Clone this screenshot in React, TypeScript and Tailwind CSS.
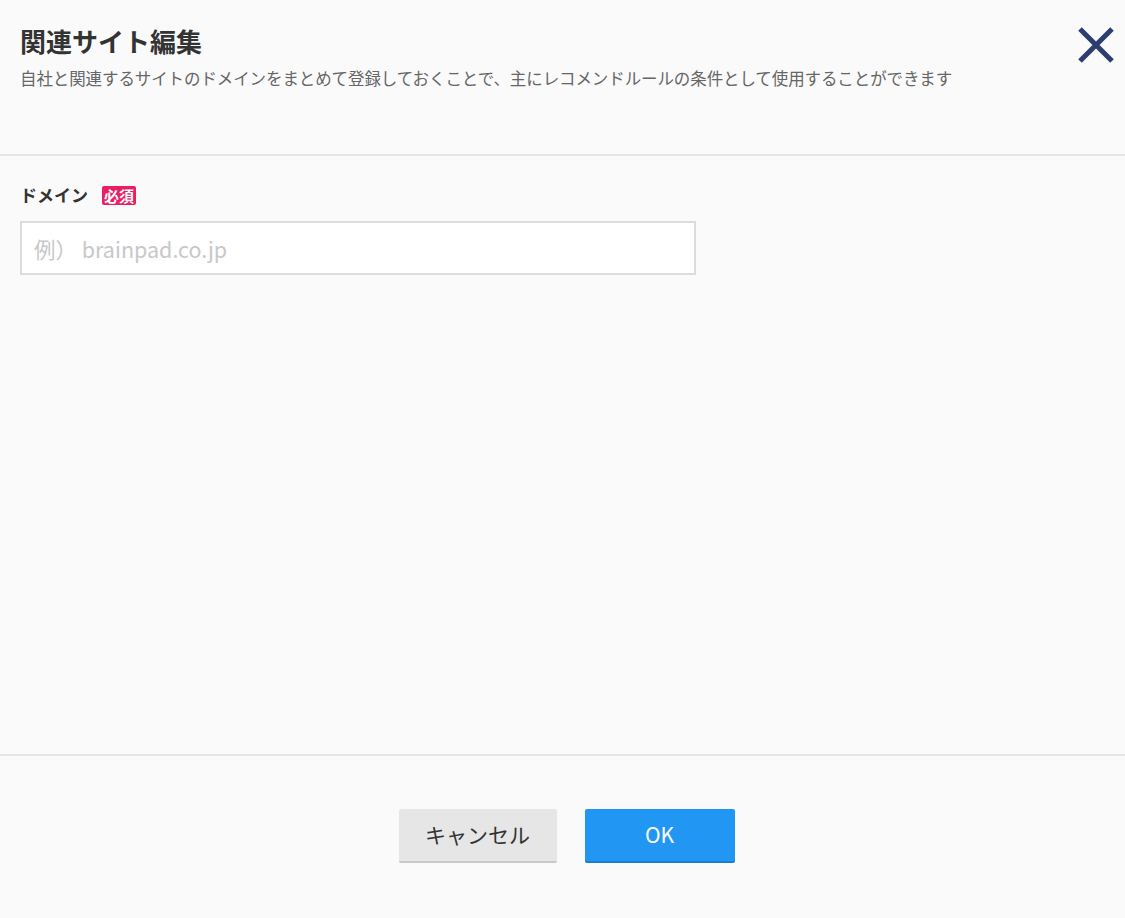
export default function App() {
  return (
    <div
      className="w-[1125px] h-[918px] bg-[#fafafa] flex flex-col text-[#333]"
      style={{ fontFamily: '"Noto Sans CJK JP", "Noto Sans", sans-serif' }}
    >
      <div className="relative h-[156px] border-b-2 border-[#e5e5e5] px-5 pt-[24px]">
        <h1 className="text-[26px] font-bold leading-[34px]">関連サイト編集</h1>
        <p className="mt-[9px] text-[16.5px] text-[#666] leading-[22px] tracking-[-0.1px]">
          自社と関連するサイトのドメインをまとめて登録しておくことで、主にレコメンドルールの条件として使用することができます
        </p>
        <button className="absolute right-[10px] top-[27px] w-[38px] h-[36px]">
          <svg viewBox="0 0 38 36" className="w-full h-full">
            <path d="M3 2 L35 34 M35 2 L3 34" stroke="#2d3e6e" strokeWidth="5" />
          </svg>
        </button>
      </div>
      <div className="flex-1 px-5 pt-[27px] border-b-2 border-[#e5e5e5]">
        <div className="flex items-center gap-[14px] h-[24px]">
          <span className="text-[17px] font-bold">ドメイン</span>
          <span className="bg-[#e91e63] text-white text-[15px] font-bold leading-[19px] px-[2px] rounded-[2px]">
            必須
          </span>
        </div>
        <input
          className="mt-[14px] w-[676px] h-[54px] bg-white border-2 border-[#dcdcdc] px-[12px] text-[21.5px] outline-none placeholder:text-[#c8c8c8]"
          placeholder="例） brainpad.co.jp"
        />
      </div>
      <div className="h-[162px] flex justify-center items-start pt-[53px] gap-[28px]">
        <button className="w-[158px] h-[54px] bg-[#e6e6e6] rounded-[2px] border-b-2 border-[#c8c8c8] text-[21px] text-[#333] ml-[8px]">
          キャンセル
        </button>
        <button className="w-[150px] h-[54px] bg-[#2196f3] rounded-[2px] border-b-2 border-[#1a7fd0] text-[21px] text-white">
          OK
        </button>
      </div>
    </div>
  )
}
